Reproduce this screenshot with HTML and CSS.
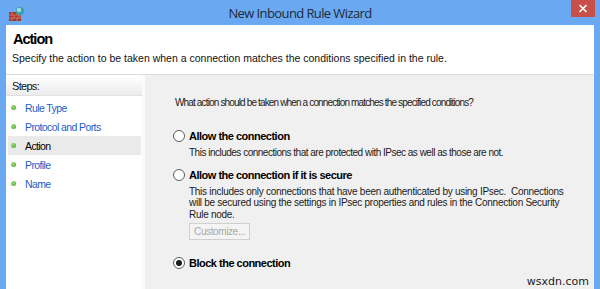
FILE: index.html
```html
<!DOCTYPE html>
<html>
<head>
<meta charset="utf-8">
<link rel="stylesheet" href="styles.css">
</head>
<body>
<div class="window">
  <div class="titlebar">
    <svg class="appicon" width="18" height="16" viewBox="0 0 18 16">
      <rect x="1" y="6" width="12" height="9" fill="#a3392b"/>
      <path d="M1 9h12M1 12h12M4 6v3M9 6v3M6 9v3M11 9v3M4 12v3M9 12v3" stroke="#d9826f" stroke-width="0.8"/>
      <circle cx="12" cy="5" r="4.2" fill="#3aa0b8"/>
      <circle cx="11" cy="4" r="2.2" fill="#9fe0cc"/>
    </svg>
    <div class="title">New Inbound Rule Wizard</div>
    <div class="close">
      <svg width="10" height="9" viewBox="0 0 10 9"><path d="M1.5 1l7 7M8.5 1l-7 7" stroke="#fff" stroke-width="1.6"/></svg>
    </div>
  </div>
  <div class="client">
    <div class="header">
      <div class="h-title">Action</div>
      <div class="h-sub">Specify the action to be taken when a connection matches the conditions specified in the rule.</div>
    </div>
    <div class="body">
      <div class="steps">
        <div class="steps-head">Steps:</div>
        <div class="step"><span class="dot"></span><span class="link">Rule Type</span></div>
        <div class="step"><span class="dot"></span><span class="link">Protocol and Ports</span></div>
        <div class="step current"><span class="dot"></span><span>Action</span></div>
        <div class="step"><span class="dot"></span><span class="link">Profile</span></div>
        <div class="step"><span class="dot"></span><span class="link">Name</span></div>
      </div>
      <div class="main">
        <div class="question">What action should be taken when a connection matches the specified conditions?</div>
        <div class="option">
          <div class="opt-row"><span class="radio"></span><span class="opt-label">Allow the connection</span></div>
          <div class="opt-desc">This includes connections that are protected with IPsec as well as those are not.</div>
        </div>
        <div class="option">
          <div class="opt-row"><span class="radio"></span><span class="opt-label">Allow the connection if it is secure</span></div>
          <div class="opt-desc wide">This includes only connections that have been authenticated by using IPsec.&nbsp; Connections<br>will be secured using the settings in IPsec properties and rules in the Connection Security<br>Rule node.</div>
          <div class="btn">Customize...</div>
        </div>
        <div class="option last">
          <div class="opt-row"><span class="radio checked"></span><span class="opt-label">Block the connection</span></div>
        </div>
        <div class="watermark">wsxdn.com</div>
      </div>
    </div>
  </div>
</div>
</body>
</html>
```
FILE: styles.css
```css
html, body { margin: 0; padding: 0; }
body {
  width: 600px;
  height: 289px;
  overflow: hidden;
  font-family: "Liberation Sans", Arial, sans-serif;
  font-size: 11px;
  color: #000;
}
.window {
  width: 600px;
  height: 289px;
  background: #6aa9f1;
  box-sizing: border-box;
  padding: 0 6px 0 6px;
  display: flex;
  flex-direction: column;
}
.titlebar {
  height: 25px;
  flex: none;
  display: flex;
  align-items: flex-start;
  position: relative;
}
.appicon { margin: 6px 0 0 2px; }
.title {
  position: absolute;
  left: 0; right: 0;
  top: 4px;
  text-align: center;
  font-family: "Open Sans", "Segoe UI", sans-serif;
  font-size: 13px;
  color: #1d2a3a;
  letter-spacing: -0.6px;
}
.close {
  margin-left: auto;
  margin-right: -1px;
  width: 24px;
  height: 17px;
  background: #c9504a;
  display: flex;
  align-items: center;
  justify-content: center;
  position: relative;
  z-index: 1;
}
.client {
  flex: 1;
  background: #fff;
  display: flex;
  flex-direction: column;
}
.header {
  height: 50px;
  flex: none;
  border-bottom: 1px solid #dcdcdc;
  box-sizing: border-box;
  padding: 5px 0 0 7px;
}
.h-title {
  font-weight: bold;
  font-size: 14.5px;
  line-height: 18px;
  letter-spacing: -1px;
}
.h-sub {
  margin-top: 4px;
  margin-left: -1px;
  font-size: 10.5px;
  color: #111;
}
.body {
  flex: 1;
  display: flex;
}
.steps {
  width: 136px;
  flex: none;
  background: #fff;
  border-right: 3px solid #fafafa;
  padding-top: 1px;
}
.steps-head {
  height: 19px;
  line-height: 21px;
  padding-left: 6px;
  background: linear-gradient(#ffffff, #ececec);
  border-bottom: 1px solid #e2e2e2;
  font-size: 11px;
  letter-spacing: -0.7px;
  color: #111;
  margin-bottom: 2px;
}
.step {
  height: 19px;
  display: flex;
  align-items: center;
  padding-left: 5px;
  margin-left: 2px;
  margin-right: 1px;
  font-size: 10.5px;
  letter-spacing: -0.6px;
}
.step.current { background: #eaeaea; }
.dot {
  width: 5px;
  height: 5px;
  border-radius: 50%;
  background: radial-gradient(circle at 35% 35%, #9fe07a, #3f9e2a);
  margin-right: 9px;
  margin-left: -2px;
}
.link { color: #1a5fc7; }
.main {
  flex: 1;
  background: #f0f0f0;
  padding: 22px 0 0 30px;
  position: relative;
}
.question {
  color: #1b1b1b;
  font-size: 10px;
  letter-spacing: -0.85px;
}
.option { margin-top: 21px; }
.option + .option { margin-top: 9px; }
.option.last { margin-top: 16px; }
.opt-row {
  display: flex;
  align-items: center;
  height: 14px;
  margin-left: -2px;
}
.radio {
  width: 10px;
  height: 10px;
  border: 1px solid #5c5c5c;
  border-radius: 50%;
  background: #fff;
  box-sizing: content-box;
  margin-right: 4px;
  display: flex;
  align-items: center;
  justify-content: center;
}
.radio.checked::after {
  content: "";
  width: 6px;
  height: 6px;
  border-radius: 50%;
  background: #1a1a1a;
}
.opt-label {
  font-weight: bold;
  font-size: 11px;
  letter-spacing: -0.5px;
}
.opt-desc {
  margin: 4px 0 0 14px;
  font-size: 10px;
  line-height: 11.5px;
  letter-spacing: -0.5px;
  color: #1b1b1b;
  white-space: nowrap;
}
.opt-desc.wide { letter-spacing: -0.28px; }
.btn {
  margin: 3px 0 0 14px;
  width: 59px;
  height: 15px;
  border: 1px solid #d0d0d0;
  background: #f4f4f4;
  color: #a8a8a8;
  font-size: 10px;
  letter-spacing: -0.4px;
  line-height: 15px;
  text-align: center;
}
.watermark {
  position: absolute;
  right: 5px;
  bottom: 1px;
  font-family: "DejaVu Sans", sans-serif;
  font-size: 11px;
  color: #222;
}
```
